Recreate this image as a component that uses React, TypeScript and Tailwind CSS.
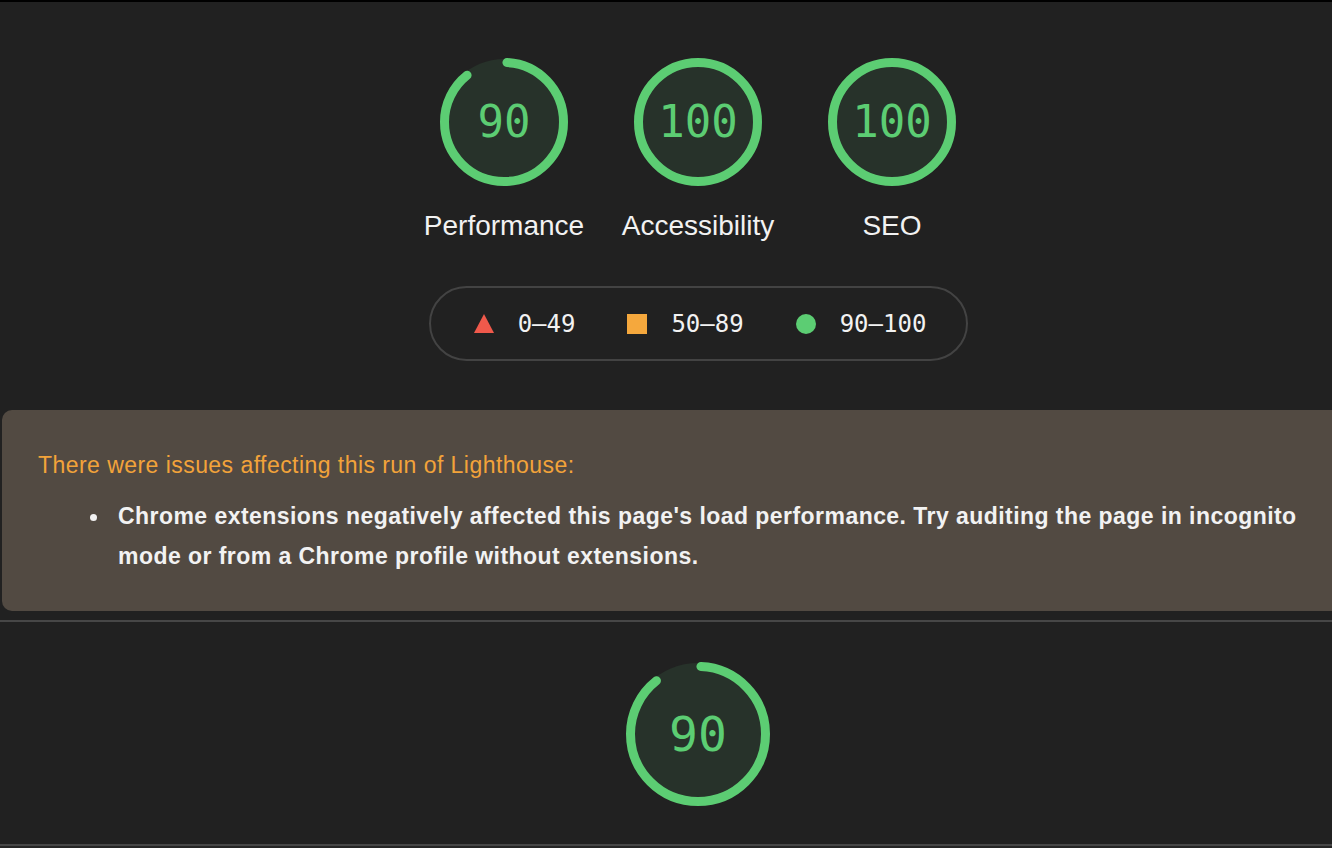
const GREEN = "#5ccd73";

function Gauge({ score, size, stroke, fontClass }: { score: number; size: number; stroke: number; fontClass: string }) {
  const r = (size - stroke) / 2;
  const c = 2 * Math.PI * r;
  const len = score >= 100 ? c : (score / 100) * c - 6;
  return (
    <div className="relative" style={{ width: size, height: size }}>
      <svg width={size} height={size} viewBox={`0 0 ${size} ${size}`}>
        <circle cx={size / 2} cy={size / 2} r={size / 2 - 1} fill="#27322a" />
        <circle
          cx={size / 2}
          cy={size / 2}
          r={r}
          fill="none"
          stroke={GREEN}
          strokeWidth={stroke}
          strokeLinecap="round"
          strokeDasharray={score >= 100 ? undefined : `${len} ${c}`}
          strokeDashoffset={score >= 100 ? undefined : -3}
          transform={`rotate(-90 ${size / 2} ${size / 2})`}
        />
      </svg>
      <div
        className={`absolute inset-0 flex items-center justify-center text-[#5ccd73] font-['DejaVu_Sans_Mono',monospace] ${fontClass}`}
      >
        {score}
      </div>
    </div>
  );
}

const categories = [
  { name: "Performance", score: 90 },
  { name: "Accessibility", score: 100 },
  { name: "SEO", score: 100 },
];

export default function App() {
  return (
    <div className="w-[1332px] h-[848px] overflow-hidden bg-[#212121] border-t-2 border-black font-['Liberation_Sans',Arial,sans-serif]">
      <div className="w-[1396px]">
        <div className="flex justify-center pt-[56px]">
          {categories.map((c) => (
            <div key={c.name} className="w-[194px] flex flex-col items-center">
              <Gauge score={c.score} size={128} stroke={9} fontClass="text-[44px]" />
              <div className="mt-[24px] text-[28px] leading-[32px] text-[#f2f2f2] whitespace-nowrap">{c.name}</div>
            </div>
          ))}
        </div>

        <div className="flex justify-center mt-[44px]">
          <div className="w-[539px] h-[75px] rounded-full border-2 border-[#434343] flex items-center justify-center gap-[52px] pl-[4px] font-['DejaVu_Sans_Mono',monospace] text-[24px] text-[#f2f2f2]">
            <div className="flex items-center gap-[24px]">
              <svg width="20" height="19" viewBox="0 0 20 19">
                <polygon points="10,0 20,19 0,19" fill="#f0594b" />
              </svg>
              <span>0–49</span>
            </div>
            <div className="flex items-center gap-[24px]">
              <span className="w-[20px] h-[20px] bg-[#f5a83d]" />
              <span>50–89</span>
            </div>
            <div className="flex items-center gap-[24px]">
              <span className="w-[20px] h-[20px] rounded-full bg-[#5ccd73]" />
              <span>90–100</span>
            </div>
          </div>
        </div>

        <div className="ml-[2px] mt-[49px] rounded-[10px] bg-[#524a42] pl-[36px] pr-[36px] pt-[35px] pb-[35px] text-[23px] leading-[40px]">
          <div className="text-[#f2a33a] leading-[40px] tracking-[0.45px]">There were issues affecting this run of Lighthouse:</div>
          <ul className="pl-[52px] mt-[11px]">
            <li className="flex">
              <span className="w-[28px] shrink-0 h-[40px] flex items-center pt-[3px]">
                <span className="w-[7px] h-[7px] rounded-full bg-[#f2f2f2]" />
              </span>
              <span className="max-w-[1220px] font-bold text-[#f2f2f2] tracking-[0.45px]">
                Chrome extensions negatively affected this page's load performance. Try auditing the page in incognito mode or from a Chrome profile without extensions.
              </span>
            </li>
          </ul>
        </div>
      </div>

      <div className="mt-[9px] h-[2px] bg-[#474747]" />

      <div className="flex justify-center pt-[40px] pb-[38px] w-[1396px]">
        <Gauge score={90} size={144} stroke={9} fontClass="text-[48px]" />
      </div>
      <div className="h-[2px] bg-[#474747]" />
      <div className="h-[4px] bg-[#262626]" />
    </div>
  );
}
